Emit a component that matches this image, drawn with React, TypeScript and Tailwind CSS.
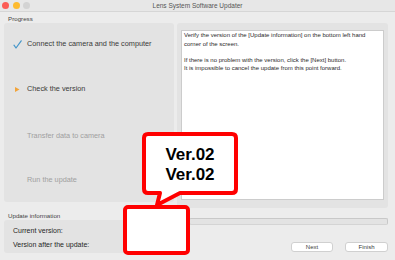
const steps = [
  { label: 'Connect the camera and the computer', state: 'done', gap: 'mt-[16px]' },
  { label: 'Check the version', state: 'current', gap: 'mt-[35px]' },
  { label: 'Transfer data to camera', state: 'todo', gap: 'mt-[37px]' },
  { label: 'Run the update', state: 'todo', gap: 'mt-[34px]' },
]

function StepIcon({ state }: { state: string }) {
  if (state === 'done') {
    return (
      <svg width="9" height="9" viewBox="0 0 9 9" className="shrink-0">
        <path d="M1 5.2 L3 8 L8.2 0.8" fill="none" stroke="#4596c9" strokeWidth="1.2" strokeLinecap="round" strokeLinejoin="round" />
      </svg>
    )
  }
  if (state === 'current') {
    return (
      <svg width="9" height="9" viewBox="0 0 9 9" className="shrink-0">
        <path d="M2 2 L6.5 4.5 L2 7 Z" fill="#f2a43a" />
      </svg>
    )
  }
  return <span className="w-[9px] shrink-0" />
}

function Callout() {
  return (
    <>
      <svg width="395" height="260" viewBox="0 0 395 260" className="pointer-events-none absolute left-0 top-0">
        <rect x="125" y="207" width="63" height="46" rx="3" fill="#ffffff" stroke="#ff0000" strokeWidth="4" />
        <path
          d="M148 134 H232 Q236 134 236 138 V189 Q236 193 232 193 H180 L157 205 L160 193 H148 Q144 193 144 189 V138 Q144 134 148 134 Z"
          fill="#ffffff"
          stroke="#ff0000"
          strokeWidth="4"
          strokeLinejoin="round"
        />
      </svg>
      <div className="absolute left-[144px] top-[145px] w-[92px] text-center text-[17px] font-bold leading-[20px] text-black">
        Ver.02
        <br />
        Ver.02
      </div>
    </>
  )
}

export default function App() {
  return (
    <div className="relative h-[260px] w-[395px] overflow-hidden bg-[#ececec] font-['Liberation_Sans',Arial,sans-serif] text-[#333]">
      {/* title bar */}
      <div className="relative flex h-[12px] items-center border-b border-[#d6d6d6] bg-[#e7e7e7] pl-[2px]">
        <div className="flex gap-[3.5px]">
          <span className="h-[7px] w-[7px] rounded-full bg-[#fc5d56]" />
          <span className="h-[7px] w-[7px] rounded-full bg-[#fdbb2f]" />
          <span className="h-[7px] w-[7px] rounded-full bg-[#d3d3d3]" />
        </div>
        <span className="absolute left-0 right-0 top-0 text-center text-[6.5px] leading-[12px] text-[#555]">
          Lens System Software Updater
        </span>
      </div>

      <div className="pl-[4px] pr-[7px]">
        <p className="pl-[4px] pt-[3px] text-[6.2px] leading-[8px] text-[#444]">Progress</p>

        <div className="flex items-start gap-[3px]">
          <div className="flex h-[179px] w-[170px] flex-col rounded-[3px] bg-[#e3e3e3] pl-[9px]">
            {steps.map((s) => (
              <div key={s.label} className={`flex h-[10px] items-center gap-[5px] ${s.gap}`}>
                <StepIcon state={s.state} />
                <span className={`whitespace-nowrap text-[7.3px] ${s.state === 'todo' ? 'text-[#a0a0a0]' : 'text-[#3a3a3a]'}`}>
                  {s.label}
                </span>
              </div>
            ))}
          </div>

          <div className="h-[185px] flex-1 rounded-[3px] bg-[#e3e3e3] px-[4px] pb-[8px] pt-[7px]">
            <div className="h-full border border-[#cccccc] bg-white pl-[2px] text-[6px] leading-[8.5px] text-[#2a2a2a]">
              <p className="whitespace-nowrap">
                Verify the version of the [Update information] on the bottom left hand
                <br />
                corner of the screen.
              </p>
              <p className="mt-[7.5px] whitespace-nowrap">
                If there is no problem with the version, click the [Next] button.
                <br />
                It is impossible to cancel the update from this point forward.
              </p>
            </div>
          </div>
        </div>

        <div className="flex">
          <div className="w-[181px]">
            <p className="pl-[4px] pt-[4px] text-[6.2px] leading-[8px] text-[#444]">Update information</p>
            <div className="h-[33px] rounded-[3px] bg-[#e3e3e3] pl-[9px] pt-[5.5px] text-[7px] leading-[9px] text-[#262626]">
              <p>Current version:</p>
              <p className="mt-[5px]">Version after the update:</p>
            </div>
          </div>
          <div className="ml-[4px] flex flex-1 flex-col pt-[10px]">
            <div className="h-[7px] rounded-[2px] border border-[#c8c8c8] border-b-[#d4d4d4] bg-[#e3e3e3]" />
            <div className="mt-[17px] flex justify-end gap-[12px]">
              <button type="button" className="h-[10px] w-[42px] rounded-[3px] border border-[#d0d0d0] bg-white text-[6px] leading-[8px] text-[#3a3a3a]">
                Next
              </button>
              <button type="button" className="h-[10px] w-[43px] rounded-[3px] border border-[#d0d0d0] bg-white text-[6px] leading-[8px] text-[#3a3a3a]">
                Finish
              </button>
            </div>
          </div>
        </div>
      </div>

      <Callout />
    </div>
  )
}
